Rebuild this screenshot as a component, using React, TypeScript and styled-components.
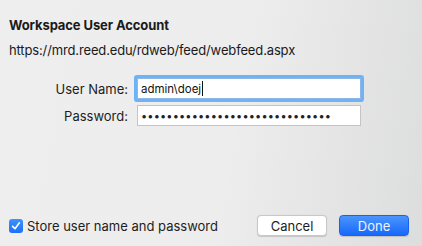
import React from "react";
import styled, { createGlobalStyle } from "styled-components";

const GlobalStyle = createGlobalStyle`
  html, body {
    margin: 0;
    padding: 0;
  }
  body {
    font-family: "Inter", "Liberation Sans", sans-serif;
    -webkit-font-smoothing: antialiased;
  }
`;

const App: React.FC = () => {
  return (
    <>
      <GlobalStyle />
      <Dialog>
        <Title>Workspace User Account</Title>
        <Url>https://mrd.reed.edu/rdweb/feed/webfeed.aspx</Url>
        <Form>
          <Label>User Name:</Label>
          <Field $focused>
            admin\doej
            <Caret />
          </Field>
          <Label>Password:</Label>
          <Field>
            <Dots>{"•".repeat(30)}</Dots>
          </Field>
        </Form>
        <Footer>
          <CheckRow>
            <Checkbox>
              <svg width="10" height="10" viewBox="0 0 10 10">
                <path
                  d="M1.6 5.4 L4 7.8 L8.4 1.8"
                  fill="none"
                  stroke="#fff"
                  strokeWidth="1.6"
                  strokeLinecap="round"
                  strokeLinejoin="round"
                />
              </svg>
            </Checkbox>
            <CheckLabel>Store user name and password</CheckLabel>
          </CheckRow>
          <Buttons>
            <Button>Cancel</Button>
            <Button $primary>Done</Button>
          </Buttons>
        </Footer>
      </Dialog>
    </>
  );
};

export default App;

const Dialog = styled.div`
  width: 422px;
  height: 246px;
  box-sizing: border-box;
  padding: 17px 13px 10px 9px;
  display: flex;
  flex-direction: column;
  background: linear-gradient(
    100deg,
    #eeeeee 0%,
    #ededed 55%,
    #e4e4e4 80%,
    #dcdddd 100%
  );
  color: #1d1d1d;
`;

const Title = styled.div`
  font-size: 13px;
  font-weight: 700;
  line-height: 16px;
  letter-spacing: -0.1px;
  color: #1a1a1a;
`;

const Url = styled.div`
  margin-top: 9px;
  font-size: 13px;
  letter-spacing: -0.14px;
  line-height: 16px;
  color: #1a1a1a;
`;

const Form = styled.div`
  display: grid;
  grid-template-columns: 119px 224px;
  column-gap: 9px;
  row-gap: 6px;
  align-items: center;
  margin-top: 20px;
`;

const Label = styled.div`
  font-size: 13px;
  text-align: right;
  color: #1d1d1d;
`;

const Field = styled.div<{ $focused?: boolean }>`
  height: 21px;
  box-sizing: border-box;
  display: flex;
  align-items: center;
  padding: 0 3px;
  background: #fff;
  border: 1px solid ${(p) => (p.$focused ? "#8fb7e6" : "#c4c4c4")};
  box-shadow: ${(p) => (p.$focused ? "0 0 0 3px #6db3f6" : "none")};
  border-radius: ${(p) => (p.$focused ? "1px" : "0")};
  font-size: 11.5px;
  color: #111;
  overflow: hidden;
  white-space: nowrap;
`;

const Caret = styled.span`
  display: inline-block;
  width: 1px;
  height: 15px;
  margin-left: 1px;
  background: #111;
`;

const Dots = styled.span`
  font-size: 11px;
  letter-spacing: 0.15px;
  color: #222;
`;

const Footer = styled.div`
  margin-top: auto;
  display: flex;
  align-items: center;
  justify-content: space-between;
`;

const CheckRow = styled.div`
  display: flex;
  align-items: center;
  gap: 4px;
`;

const Checkbox = styled.div`
  width: 14px;
  height: 14px;
  border-radius: 3px;
  background: linear-gradient(#3d93fc, #1c6ff8);
  display: flex;
  align-items: center;
  justify-content: center;
`;

const CheckLabel = styled.span`
  font-size: 13px;
  color: #1d1d1d;
`;

const Buttons = styled.div`
  display: flex;
  gap: 12px;
`;

const Button = styled.button<{ $primary?: boolean }>`
  width: 70px;
  height: 21px;
  box-sizing: border-box;
  border-radius: 4px;
  font-family: inherit;
  font-size: 13px;
  padding: 0;
  border: 1px solid ${(p) => (p.$primary ? "#1a62e8" : "#c8c8c8")};
  background: ${(p) =>
    p.$primary ? "linear-gradient(#4b95fc, #1668f9)" : "#fff"};
  color: ${(p) => (p.$primary ? "#eef4ff" : "#1d1d1d")};
  box-shadow: 0 0.5px 1px rgba(0, 0, 0, 0.15);
`;
